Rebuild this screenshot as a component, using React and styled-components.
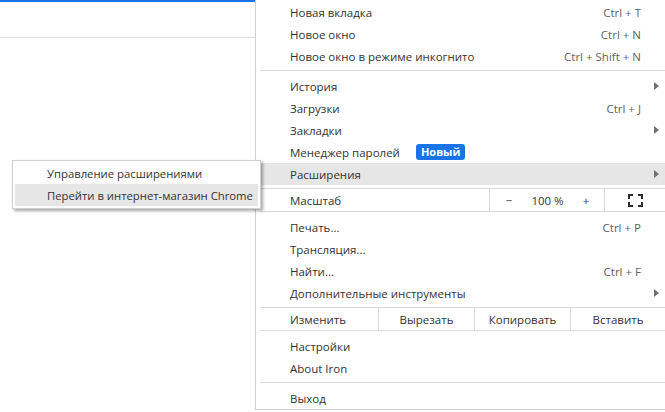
import React from "react";
import styled, { createGlobalStyle } from "styled-components";

const GlobalStyle = createGlobalStyle`
  body {
    margin: 0;
    background: #fff;
    font-family: "Open Sans", "Liberation Sans", sans-serif;
    overflow: hidden;
  }
`;

const Page = styled.div`
  position: relative;
  display: flex;
  align-items: flex-start;
  width: 665px;
  height: 412px;
  background: #fff;
`;

const LeftPane = styled.div`
  width: 255px;
  flex-shrink: 0;
  border-top: 2px solid #1a73e8;
`;

const TabStrip = styled.div`
  height: 35px;
  border-bottom: 1px solid #dadada;
`;

const Menu = styled.div`
  flex: 1;
  padding-top: 1px;
  background: #fff;
  border-left: 1px solid #cfcfcf;
  border-bottom: 1px solid #cfcfcf;
  font-size: 11.5px;
  color: #333;
`;

const Item = styled.div`
  display: flex;
  align-items: center;
  height: 22px;
  padding-left: 34px;
  background: ${(p) => (p.$active ? "#e6e6e6" : "transparent")};
`;

const Label = styled.span`
  flex: 1;
  display: flex;
  align-items: center;
  white-space: nowrap;
`;

const Shortcut = styled.span`
  color: #5f5f5f;
  white-space: nowrap;
`;

const Trail = styled.span`
  width: 24px;
  display: flex;
  justify-content: flex-end;
  padding-right: 6px;
  box-sizing: border-box;
`;

const Arrow = styled.span`
  width: 0;
  height: 0;
  border-left: 5px solid #707070;
  border-top: 4px solid transparent;
  border-bottom: 4px solid transparent;
`;

const Badge = styled.span`
  margin-left: 16px;
  padding: 0 5px;
  height: 16px;
  line-height: 16px;
  border-radius: 3px;
  background: #1a73e8;
  color: #fff;
  font-weight: 700;
  font-size: 11px;
`;

const Separator = styled.div`
  height: 1px;
  margin: 3px 0 4px 4px;
  background: #dadada;
`;

const ControlRow = styled.div`
  display: flex;
  align-items: stretch;
  height: 22px;
  margin: 3px 0 4px 4px;
  border-top: 1px solid #dadada;
  border-bottom: 1px solid #dadada;
`;

const RowLabel = styled.span`
  flex: 1;
  display: flex;
  align-items: center;
  padding-left: 30px;
`;

const Cell = styled.div`
  display: flex;
  align-items: center;
  justify-content: center;
  border-left: 1px solid #dadada;
  width: ${(p) => p.$w}px;
  flex: none;
  box-sizing: border-box;
`;

const ZoomControls = styled.div`
  display: grid;
  grid-template-columns: 38px 39px 38px;
  width: 115px;
  border-left: 1px solid #dadada;
  box-sizing: border-box;
  align-items: center;
  justify-items: center;
`;

const Submenu = styled.div`
  position: absolute;
  left: 12px;
  top: 160px;
  width: 249px;
  box-sizing: border-box;
  padding: 1px 2px 2px;
  background: #fff;
  border: 1px solid #cfcfcf;
  box-shadow: 2px 2px 3px rgba(0, 0, 0, 0.35);
  font-size: 11.3px;
  color: #333;
`;

const SubItem = styled.div`
  height: 22px;
  display: flex;
  align-items: center;
  padding-left: 32px;
  white-space: nowrap;
  background: ${(p) => (p.$active ? "#e6e6e6" : "transparent")};
`;

const FullscreenIcon = () => (
  <svg width="15" height="13" viewBox="0 0 15 13">
    <path
      d="M1 5V1h4M10 1h4v4M14 8v4h-4M5 12H1V8"
      fill="none"
      stroke="#2b2b2b"
      strokeWidth="2"
    />
  </svg>
);

const MenuItem = ({ label, shortcut, arrow, active, children }) => (
  <Item $active={active}>
    <Label>
      {label}
      {children}
    </Label>
    {shortcut && <Shortcut>{shortcut}</Shortcut>}
    <Trail>{arrow && <Arrow />}</Trail>
  </Item>
);

export default function App() {
  return (
    <>
      <GlobalStyle />
      <Page>
        <LeftPane>
          <TabStrip />
        </LeftPane>
        <Menu>
          <MenuItem label="Новая вкладка" shortcut="Ctrl + T" />
          <MenuItem label="Новое окно" shortcut="Ctrl + N" />
          <MenuItem
            label="Новое окно в режиме инкогнито"
            shortcut="Ctrl + Shift + N"
          />
          <Separator />
          <MenuItem label="История" arrow />
          <MenuItem label="Загрузки" shortcut="Ctrl + J" />
          <MenuItem label="Закладки" arrow />
          <MenuItem label="Менеджер паролей">
            <Badge>Новый</Badge>
          </MenuItem>
          <MenuItem label="Расширения" arrow active />
          <ControlRow>
            <RowLabel>Масштаб</RowLabel>
            <ZoomControls>
              <span>−</span>
              <span>100 %</span>
              <span>+</span>
            </ZoomControls>
            <Cell $w={61}>
              <FullscreenIcon />
            </Cell>
          </ControlRow>
          <MenuItem label="Печать..." shortcut="Ctrl + P" />
          <MenuItem label="Трансляция..." />
          <MenuItem label="Найти..." shortcut="Ctrl + F" />
          <MenuItem label="Дополнительные инструменты" arrow />
          <ControlRow>
            <RowLabel>Изменить</RowLabel>
            <Cell $w={96}>Вырезать</Cell>
            <Cell $w={96}>Копировать</Cell>
            <Cell $w={95}>Вставить</Cell>
          </ControlRow>
          <MenuItem label="Настройки" />
          <MenuItem label="About Iron" />
          <Separator />
          <MenuItem label="Выход" />
        </Menu>
        <Submenu>
          <SubItem>Управление расширениями</SubItem>
          <SubItem $active>Перейти в интернет-магазин Chrome</SubItem>
        </Submenu>
      </Page>
    </>
  );
}
